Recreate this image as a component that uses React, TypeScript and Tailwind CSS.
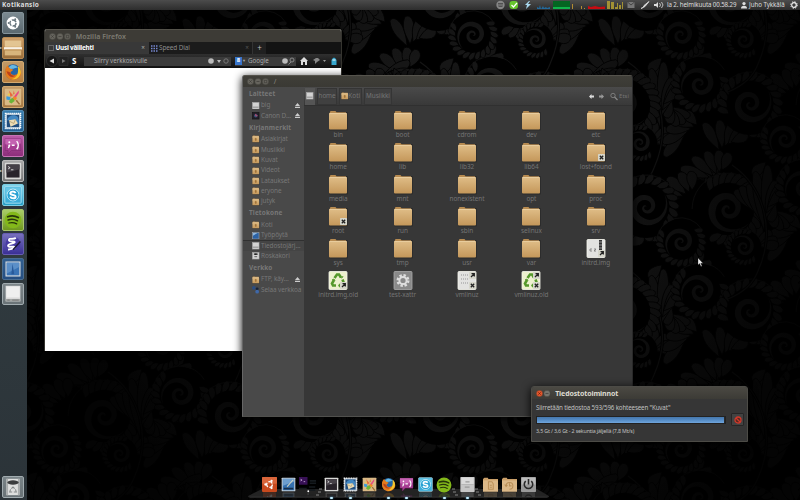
import React from "react";

const FONT = "font-['Noto_Sans','Open_Sans',sans-serif]";

type Point = [number, number];

function spiralPath(cx: number, cy: number, r: number, start: number, turns = 2): string {
  const outer: Point[] = [];
  const inner: Point[] = [];
  const n = 60;
  for (let i = 0; i <= n; i++) {
    const t = i / n;
    const a = start + t * turns * Math.PI * 2;
    const rad = r * Math.pow(1 - t, 1.15);
    const w = r * 0.36 * Math.min(1, t * 5) * Math.pow(1 - t, 0.9);
    outer.push([cx + Math.cos(a) * rad, cy + Math.sin(a) * rad]);
    const ri = Math.max(0, rad - w);
    inner.push([cx + Math.cos(a) * ri, cy + Math.sin(a) * ri]);
  }
  return "M" + [...outer, ...inner.reverse()].map((p) => p[0].toFixed(1) + " " + p[1].toFixed(1)).join("L") + "Z";
}

function Leaf({ x, y, a, l, w }: { x: number; y: number; a: number; l: number; w: number }) {
  return (
    <path
      stroke="#000"
      strokeWidth="0.8"
      transform={`translate(${x.toFixed(1)} ${y.toFixed(1)}) rotate(${a.toFixed(1)})`}
      d={`M0 0C${l * 0.3} ${-w * 0.5} ${l * 0.6} ${-w * 1.3} ${l} ${-w * 0.6}C${l * 1.15} ${w * 0.3} ${l * 0.8} ${w * 0.9} ${l * 0.55} ${w * 0.7}C${l * 0.3} ${w * 0.6} ${l * 0.1} ${w * 0.2} 0 0Z`}
    />
  );
}

function Curl({ x, y, r, s, leaves = 16 }: { x: number; y: number; r: number; s: number; leaves?: number }) {
  return (
    <g>
      <circle cx={x} cy={y} r={r * 1.24} fill="#000" />
      {Array.from({ length: leaves }, (_, i) => {
        const a = s - 3 + (i / leaves) * 4.4;
        return (
          <Leaf key={i} x={x + Math.cos(a) * r * 0.86} y={y + Math.sin(a) * r * 0.86} a={(a * 180) / Math.PI + 50} l={r * 0.54} w={r * 0.17} />
        );
      })}
      <circle cx={x} cy={y} r={r * 0.94} fill="#000" />
      <path d={spiralPath(x, y, r * 0.9, s)} />
      <path d={`M${x - r * 1.28} ${y}A${r * 1.28} ${r * 1.28} 0 0 1 ${x + r * 1.1} ${y - r * 0.65}`} fill="none" stroke="#181818" strokeWidth="0.8" />
    </g>
  );
}

function Filler() {
  const clumps: Point[] = [[10, 20], [52, 30], [165, 30], [190, 75], [20, 150], [70, 180], [130, 170], [185, 185], [160, 95], [95, 150], [60, 70], [140, 5]];
  return (
    <g>
      {clumps.map(([x, y], j) =>
        [0, 1, 2, 3, 4].map((i) => <Leaf key={`${j}-${i}`} x={x + i * 3} y={y - i * 2} a={j * 67 + i * 24} l={30 - i * 3} w={6.5} />)
      )}
    </g>
  );
}

function Motif() {
  return (
    <g>
      {[-138, -122, -108, -97, -86, -74, -60, -44].map((a, i) => (
        <Leaf key={a} x={36 + (i - 3) * 0.8} y={128 - Math.abs(i - 3) * 6} a={a} l={i === 3 || i === 4 ? 58 : 46 - Math.abs(i - 3) * 4} w={7} />
      ))}
      <Curl x={76} y={84} r={22} s={2.6} />
      <Curl x={126} y={104} r={25} s={-0.6} />
      <Curl x={104} y={2} r={28} s={0.6} leaves={20} />
      <Curl x={161} y={139} r={19} s={2.2} />
      <Curl x={120} y={40} r={14} s={-2.6} />
      <path d="M4 62C36 84 48 128 30 168C24 184 10 192 0 196" fill="none" stroke="#000" strokeWidth="3" />
      <path d="M4 62C36 84 48 128 30 168C24 184 10 192 0 196" fill="none" stroke="#181818" strokeWidth="1.1" />
    </g>
  );
}

const offsets: Point[] = [[0, 0], [208, 0], [-208, 0], [0, 207], [0, -207], [104, 103], [-104, 103], [104, -104], [-104, -104]];

function Wallpaper() {
  return (
    <svg className="absolute inset-0" width="800" height="500">
      <defs>
        <pattern id="damask" width="208" height="207" patternUnits="userSpaceOnUse">
          <g fill="#1a1a1a">
            {offsets.map(([x, y]) => <g key={`f${x},${y}`} transform={`translate(${x} ${y})`}><Filler /></g>)}
            {offsets.map(([x, y]) => <g key={`m${x},${y}`} transform={`translate(${x} ${y})`}><Motif /></g>)}
          </g>
        </pattern>
        <radialGradient id="shade" gradientUnits="userSpaceOnUse" cx="450" cy="190" r="400">
          <stop offset="0" stopColor="#000" stopOpacity="0" />
          <stop offset="0.4" stopColor="#000" stopOpacity="0.2" />
          <stop offset="0.72" stopColor="#000" stopOpacity="0.65" />
          <stop offset="1" stopColor="#000" stopOpacity="0.86" />
        </radialGradient>
      </defs>
      <rect width="800" height="500" fill="#000" />
      <rect width="800" height="500" fill="url(#damask)" />
      <rect width="800" height="500" fill="url(#shade)" />
    </svg>
  );
}

type Kind =
  | "ubuntu" | "files" | "firefox" | "paint" | "mail" | "chat" | "term" | "skype" | "spotify" | "emacs" | "screen" | "drive" | "trash"
  | "ubuntuOrange" | "desk" | "spaces" | "docfolder" | "clockfolder" | "power" | "cabinet";

const Circles = () => (
  <g fill="none" stroke="#fff" strokeWidth="2">
    <circle cx="11" cy="11" r="4.2" strokeDasharray="6.6 2.2" />
    <g fill="#fff" stroke="none"><circle cx="5" cy="11" r="1.7" /><circle cx="14" cy="5.8" r="1.7" /><circle cx="14" cy="16.2" r="1.7" /></g>
  </g>
);

function Glyph({ kind }: { kind: Kind }) {
  switch (kind) {
    case "ubuntu":
      return <><circle cx="11" cy="11" r="7.8" fill="#fff" /><circle cx="11" cy="11" r="3.7" fill="none" stroke="#68767d" strokeWidth="1.7" strokeDasharray="6.2 1.55" /><circle cx="5.700" cy="11" r="1.200" fill="#68767d" /><circle cx="13.700" cy="6.400" r="1.200" fill="#68767d" /><circle cx="13.700" cy="15.600" r="1.200" fill="#68767d" /></>;
    case "ubuntuOrange":
      return <><rect width="22" height="22" rx="1.5" fill="#c94a1e" /><rect width="22" height="10" rx="1.5" fill="#d9653a" /><Circles /></>;
    case "files":
      return <><path d="M1 2h20v18H1z" fill="#d8b57c" /><path d="M1 2h20v7H1z" fill="#e3c592" /><path d="M0 10h22v2.8H0z" fill="#f8f1e5" /><path d="M1 12.800h20v1.200H1z" fill="#b88a4c" /></>;
    case "firefox":
      return (
        <>
          <circle cx="11" cy="11" r="9.5" fill="#2565a4" />
          <path d="M6 5c3-4 9-3 11 1-3-1-4 1-7 1S7 9 5 8z" fill="#65b9e4" />
          <path d="M1.500 8C3 4 4 3 5 3c0 2 2 3 3 4l3 1c0 2-3 2-3 4 1 3 5 3 7 2 3-1 4-4 3-8 4 4 4 10-1 13-6 4-15 1-15.500-7z" fill="#e47b1c" />
          <path d="M17 4c4 3 5 9 1 13-3 3-6 3-9 3 7-2 9-7 8-16z" fill="#f6c62b" />
          <path d="M3 10c2 0 4 1 5 2 0 3 3 4 6 3-3 4-9 2-11-5z" fill="#b9401a" />
        </>
      );
    case "paint":
      return (
        <>
          <rect x="1" y="1" width="20" height="20" rx="1" fill="#d9b985" />
          <path d="M6 3l5 6-3 2zM12 3l1 4-2 1z" fill="#e8693c" />
          <path d="M18 3l-8 10 3 1 5-8z" fill="#e64a83" />
          <path d="M3 10l5 1-1 4-4-1z" fill="#3b9bd8" />
          <path d="M8 13l4-1 1 4-4 3-3-2z" fill="#6ab436" />
          <path d="M12 10l4 2-2 3-3-2z" fill="#f08a24" />
          <path d="M15 15l4 5" stroke="#9a6c37" strokeWidth="1.8" />
          <circle cx="6" cy="8" r="1.2" fill="#f2cf3a" />
        </>
      );
    case "mail":
      return (
        <>
          <rect x="1.800" y="1.800" width="18.400" height="18.400" fill="#c5d7e4" stroke="#fff" strokeWidth="1.800" strokeDasharray="1.500 1" />
          <rect x="3.500" y="3.500" width="15" height="15" fill="#1f4c7d" />
          <path d="M4 10c1-6 9-8 13-4l1 4v5c-3-4-8-4-14-5z" fill="#4388c2" />
          <path d="M6 10l8-1 3 5-9 4z" fill="#ecdcb4" />
          <path d="M6 11l6 3 2-5" fill="none" stroke="#a28e63" strokeWidth=".8" />
        </>
      );
    case "chat":
      return (
        <>
          <path d="M1.500 2h19v14.500H9L5 20.500v-4H1.500z" fill="#a63d92" stroke="#762768" strokeWidth=".6" />
          <path d="M1.500 2h19v6q-9 3-19 1z" fill="#c462b1" />
          <g fill="none" stroke="#fff" strokeWidth="1.700"><path d="M9.500 10h3.500M15.500 5q4 5 0 10M6.500 10.500q0 2-1.500 3" /></g>
          <circle cx="6.500" cy="6.500" r="1.200" fill="#fff" /><circle cx="6.500" cy="10.500" r="1.200" fill="#fff" />
        </>
      );
    case "term":
      return <><rect x="1" y="1" width="20" height="20" rx="1" fill="#d8d8d6" /><rect x="3" y="3" width="16" height="16" fill="#28232a" /><path d="M3 3h16v6L3 13z" fill="#454047" /><path d="M5 5.500l2.500 1.500L5 8.500M8.500 9.500h3" fill="none" stroke="#eee" strokeWidth="1" /></>;
    case "skype":
      return <><rect x="1" y="1" width="20" height="20" rx="1" fill="#3caed9" stroke="#b8e8f5" strokeWidth="1" /><rect x="2" y="2" width="18" height="8" fill="#66c6e6" /><g fill="none" stroke="#e4f7fd" strokeWidth="1.100"><circle cx="11" cy="11" r="7.200" /></g><circle cx="11" cy="11" r="6.700" fill="#27a1d3" /><path d="M14.200 8.500C12.500 6 7.700 6.500 7.700 9c0 2.800 6.500 1.200 6.500 4 0 2.800-5.200 2.800-6.700 0" fill="none" stroke="#fff" strokeWidth="2.400" /></>;
    case "spotify":
      return <><circle cx="11" cy="11" r="10.200" fill="#83b81a" /><g fill="none" stroke="#26340a" strokeLinecap="round"><path d="M4.500 7q7-2.500 13 1" strokeWidth="2.200" /><path d="M5 11q6-2 11.500 1" strokeWidth="1.800" /><path d="M6 14.700q5-1.500 9.500 1" strokeWidth="1.500" /></g></>;
    case "emacs":
      return <><circle cx="11" cy="11" r="9" fill="#473ba2" /><path d="M14.500 3.500C11 6 6 3 6 6s8 1 7 3-8 1-8 4 8 0 8 2-4 2-8 3" fill="none" stroke="#fff" strokeWidth="2.300" /><path d="M20 8l-9 10" stroke="#191731" strokeWidth="1.800" /></>;
    case "screen":
      return <><rect x="2.500" y="2.500" width="17" height="17" fill="#3973b5" stroke="#d8dcdf" strokeWidth="1.400" /><path d="M3.500 3.500h15v5l-15 8z" fill="#5b8fc8" /><path d="M10.500 4.500l2 13H9z" fill="#28599a" /></>;
    case "desk":
      return <><rect x="1" y="1" width="20" height="20" rx="1" fill="#cbd4dc" /><rect x="2.500" y="2.500" width="17" height="17" fill="#3570af" /><path d="M3 3h16v4L3 13z" fill="#6d9ece" /><path d="M4 17h14" stroke="#162f4c" strokeWidth="2.500" /><path d="M18 4l-9 10" stroke="#d8d8bd" strokeWidth="1.500" /></>;
    case "drive":
      return <><path d="M2 1h18v19H2z" fill="#dedfdf" /><path d="M3 2h16v13H3z" fill="#efefef" /><path d="M2 17h18v3H2z" fill="#a2a5a4" /><path d="M4 18.500h3m3 0h8" stroke="#666" strokeWidth=".8" /></>;
    case "trash":
      return <><path d="M3 1h16v20H3z" fill="#dedfde" /><path d="M3 1h2v20H3zm14 0h2v20h-2z" fill="#a9adad" /><ellipse cx="11" cy="5.500" rx="7" ry="2.600" fill="#3b3d3e" /><g fill="none" stroke="#858989" strokeWidth="1.300"><path d="M9 13l2-2 2 2M14 14l1 3h-3M10 17H7l1-3" /></g></>;
    case "spaces":
      return <><rect x="0" y="0" width="11" height="10" fill="#371055" /><path d="M2 3l2 1-2 1m4 1h2" stroke="#d3b7e3" fill="none" /><path d="M14 5h8M14 8h8M0 15h10M13 13h8M13 17h8" stroke="#151a1e" strokeWidth="2" /><circle cx="12" cy="18.500" r="1.200" fill="#fff" /></>;
    case "docfolder":
    case "clockfolder":
      return (
        <>
          <path d="M0 3l2-2h5l1 2h14v18H0z" fill="#cba06a" /><path d="M0 5h22v16.500H0z" fill="#dbb888" />
          <g fill="none" stroke="#b98f58" strokeWidth="1.500">{kind === "docfolder" ? <path d="M8 7h5l2 3v8H8zM10 12h3m-3 3h3" /> : <path d="M6 13a5 5 0 1 1 5 5M11 9v4h3M4 11l2 3 2-2" />}</g>
        </>
      );
    case "power":
      return <><rect x="0" y="0" width="22" height="22" rx="1" fill="#999" /><rect x="1" y="1" width="20" height="10" fill="#bababa" /><path d="M7 6a6.200 6.200 0 1 0 8 0M11 3v8" fill="none" stroke="#292929" strokeWidth="2.300" /></>;
    case "cabinet":
      return <><rect x="0.500" y="0" width="21" height="22" rx="1" fill="#c6c6c6" /><path d="M2 1h18v10H2z" fill="#dadada" /><path d="M2 11h18" stroke="#aaa" /><path d="M8 7h6M7 15h7" stroke="#9a9a9a" strokeWidth="1.800" /></>;
  }
}

function AppIcon({ kind, size }: { kind: Kind; size: number }) {
  return <svg width={size} height={size} viewBox="0 0 22 22" className="block shrink-0"><Glyph kind={kind} /></svg>;
}

const launcher: { kind: Kind; bg: string; mark?: boolean }[] = [
  { kind: "ubuntu", bg: "from-[#7b8a91] to-[#5b6970] border-[#84939a]" },
  { kind: "files", bg: "from-[#cfa069] to-[#9a6f3b] border-[#ba8b53]", mark: true },
  { kind: "firefox", bg: "from-[#c29b68] to-[#ba8140] border-[#d3aa70]", mark: true },
  { kind: "paint", bg: "from-[#c29b68] to-[#a57842] border-[#d3aa70]" },
  { kind: "mail", bg: "from-[#397eaf] to-[#245e91] border-[#5690b9]", mark: true },
  { kind: "chat", bg: "from-[#bb5aa7] to-[#8d2e7b] border-[#c674b5]", mark: true },
  { kind: "term", bg: "from-[#a8a8a8] to-[#777] border-[#bcbcbc]", mark: true },
  { kind: "skype", bg: "from-[#83d4ea] to-[#249cc5] border-[#79cde4]" },
  { kind: "spotify", bg: "from-[#a9ce68] to-[#70991c] border-[#a7c46c]", mark: true },
  { kind: "emacs", bg: "from-[#7870bd] to-[#3b2f96] border-[#655cb1]" },
  { kind: "screen", bg: "from-[#315f91] to-[#254e81] border-[#496d91]" },
  { kind: "drive", bg: "from-[#7c8589] to-[#697276] border-[#a1abaf]" },
];

function Tile({ kind, bg, mark }: { kind: Kind; bg: string; mark?: boolean }) {
  return (
    <div className="flex h-[22px] items-center">
      <span className="w-[2px] text-[4px] leading-none text-[#ddd]">{mark ? "▸" : ""}</span>
      <div className={`flex h-[22px] w-[22px] items-center justify-center rounded-[2px] border bg-gradient-to-b ${bg}`}>
        <AppIcon kind={kind} size={18} />
      </div>
    </div>
  );
}

function Launcher() {
  return (
    <div className="relative flex h-[490px] w-[27px] flex-col bg-gradient-to-b from-[#20282b] via-[#303a3f] to-[#2b3338] pt-[2px]">
      <div className="flex flex-col gap-[2.600px]">{launcher.map((l) => <Tile key={l.kind} {...l} />)}</div>
      <div className="mt-auto mb-[2px]"><Tile kind="trash" bg="from-[#7a8488] to-[#697276] border-[#a1abaf]" /></div>
    </div>
  );
}

function TopBar() {
  return (
    <div className="relative flex h-[10px] w-full items-center bg-gradient-to-b from-[#4c4c4c] to-[#2d2d2d] text-[#ddd]">
      <span className="ml-[2px] text-[6.500px] font-bold leading-[10px] tracking-[0.260px]">Kotikansio</span>
      <div className="ml-auto flex h-[10px] w-[306px] items-center">
        <svg className="block shrink-0" width="173" height="10" viewBox="0 0 173 10">
          <circle cx="6.500" cy="5" r="4.200" fill="#858585" /><path d="M4 3.500h5M4 5h5M4.500 6.500h4" stroke="#444" strokeWidth=".8" />
          <rect x="15.500" y="1" width="8.500" height="8" rx="3" fill="#67c52e" /><path d="M17.500 5l2 2 3.500-4" fill="none" stroke="#fff" strokeWidth="1.200" />
          <path d="M35 1l-4 4h2l-1 4 5-5h-3l2-3z" fill="#a9d9ee" />
          <path d="M43 9V7l2 1 1-3 1 4 2-3 1 2 2-1 1 1 3-1v2z" fill="#24699a" />
          <path d="M59 1h17v8H59z" fill="#056522" /><path d="M59 7h17v2H59z" fill="#10b34b" />
          <path d="M78 9V4h1v5m8 0V6h1v3m2 0V8h1v1" fill="#b18b33" />
          <path d="M94 9V6l3 1 4-1 4 1 6-.5V9z" fill="#c60c12" />
          <path d="M113 1h3v8h-3zm4 1h3v7h-3zm4 5h2v2h-2zm2-4h1v6h-1zm2 2h2v4h-2zm3-3h1v7h-1z" fill="#a29134" />
          <rect x="133.500" y="2" width="7" height="6" fill="#777" /><path d="M133.500 2l3.500 3L140.500 2" fill="none" stroke="#393939" strokeWidth=".8" />
          <path d="M147 8.500l2-1 1-2 5-4-4 5-2 1z" fill="#ddd" stroke="#ddd" strokeWidth=".8" />
          <path d="M160 4h2l2-2v6l-2-2h-2z" fill="#ddd" /><path d="M165.500 3q2 2 0 4M167.500 2q3 3 0 6" stroke="#ddd" fill="none" strokeWidth=".8" />
        </svg>
        <span className="w-[71px] shrink-0 whitespace-nowrap text-[6.200px] leading-[10px] tracking-[-0.130px]">la 2. helmikuuta 00.58.29</span>
        <svg width="6" height="8" viewBox="0 0 7 8" className="ml-[3px] mr-[2px] shrink-0"><circle cx="3.500" cy="2.300" r="1.900" fill="#ddd" /><path d="M0 8q0-3 3.500-3T7 8z" fill="#ddd" /></svg>
        <span className="whitespace-nowrap text-[6.200px] leading-[10px] tracking-[-0.050px]">Juho Tykkälä</span>
        <svg width="8" height="8" viewBox="0 0 8 8" className="ml-auto mr-[2px] shrink-0"><circle cx="4" cy="4" r="2.300" fill="none" stroke="#eee" strokeWidth="1.200" /><circle cx="4" cy="4" r="3.300" fill="none" stroke="#eee" strokeWidth="1" strokeDasharray="1.300 1.300" /></svg>
      </div>
    </div>
  );
}

function WinButtons({ n, active }: { n: number; active?: boolean }) {
  return (
    <svg width={n * 7.6} height="7" viewBox={`0 0 ${n * 7.6} 7`} className="block shrink-0">
      {Array.from({ length: n }, (_, i) => (
        <g key={i}>
          <circle cx={3.500 + i * 7.500} cy="3.500" r="3.200" fill={active && i === 0 ? "#e5562b" : active ? "#77756d" : "#66645d"} stroke="#3a3934" strokeWidth=".4" />
          <path d={i === 0 ? "M2.300 2.300l2.400 2.400m0-2.400L2.300 4.700" : i === 1 ? "M9.500 3.500h3" : "M17.300 2.300h2.500v2.500h-2.500z"} stroke={active && i === 0 ? "#5e1808" : "#3c3b36"} strokeWidth=".7" fill="none" />
        </g>
      ))}
    </svg>
  );
}

function Firefox() {
  return (
    <div className="absolute left-[44px] top-[29px] flex h-[322px] w-[298px] flex-col overflow-hidden rounded-t-[3px] border-x border-[#35342f] bg-white shadow-[0_2px_8px_#000]">
      <div className="flex h-[13px] items-center border-t border-[#55534b] bg-[#3d3b36] pl-[4px]">
        <WinButtons n={3} /><span className="ml-[4px] text-[7px] font-semibold leading-none tracking-[0.050px] text-[#7d7b73]">Mozilla Firefox</span>
      </div>
      <div className="flex h-[12px] bg-[#131313] text-[6.400px] leading-[12px]">
        <div className="flex w-[104px] items-center bg-[#383838]"><span className="ml-[3px] h-[6px] w-[6px] border border-dashed border-[#666]" /><span className="ml-[1.500px] font-bold tracking-[-0.250px] text-white">Uusi välilehti</span><span className="ml-auto mr-[4px] text-[#aaa]">×</span></div>
        <div className="flex w-[104px] items-center border-r border-[#333] bg-[#1b1b1b] text-[#8c8c8c]">
          <svg width="7" height="7" className="ml-[2px]"><path d="M0 1h7M0 3.500h7M0 6h7" stroke="#7788d0" strokeWidth="1.500" strokeDasharray="1.500 1" /></svg>
          <span className="ml-[1px] tracking-[-0.100px]">Speed Dial</span><span className="ml-auto mr-[3px] text-[#555]">×</span>
        </div>
        <span className="w-[13px] bg-[#202020] text-center text-[8px] text-[#bbb]">+</span>
      </div>
      <div className="flex h-[14px] shrink-0 items-center bg-gradient-to-b from-[#303030] to-[#111] text-[6.200px] text-[#aaa]">
        <svg width="34" height="12" viewBox="0 0 34 12"><circle cx="7" cy="6" r="5.500" fill="#171717" stroke="#444" strokeWidth=".5" /><path d="M9 3.500v5L4.500 6z" fill="#ddd" /><rect x="14" y="1.500" width="9" height="9" fill="#222" stroke="#383838" strokeWidth=".5" /><path d="M17 4v4l3.500-2z" fill="#777" /></svg>
        <span className="ml-[-7px] w-[12px] text-[8px] font-bold text-white">S</span>
        <div className="flex h-[9px] w-[147px] items-center bg-[#3b3b3b] pl-[10px]">
          <span className="whitespace-nowrap tracking-[-0.050px]">Siirry verkkosivulle</span>
          <svg width="24" height="8" className="ml-auto"><circle cx="4" cy="4" r="2.800" fill="#bbb" /><path d="M10 3h4l-2 3z" fill="#bbb" /><circle cx="19" cy="4" r="2.200" stroke="#777" fill="none" /></svg>
        </div>
        <div className="ml-[4px] flex h-[9px] w-[61px] items-center bg-[#3b3b3b]"><span className="h-[8px] w-[7px] bg-[#3874ca] text-center text-[6px] font-bold leading-[7px] text-white">8</span><span className="text-[4px]">▼</span><span className="ml-[2px]">Google</span><svg width="15" height="8" className="ml-auto"><circle cx="4" cy="4" r="2.800" fill="#bbb" /><circle cx="11" cy="3" r="2" fill="none" stroke="#888" /><path d="M10 5L7.500 7.500" stroke="#888" /></svg></div>
        <svg width="40" height="10" className="ml-[3px]"><path d="M1 5l4-4 4 4H8v4H6V6H4v3H2V5z" fill="#ddd" /><path d="M14 4l3-2h2l2 2-3 2-2 2V5z" fill="#888" /><path d="M24 4h3l-1.500 2z" fill="#999" /><path d="M32.500 9V4q2.500-5 5 0v5z" fill="#37a8cf" /><path d="M33.500 4h3" stroke="#fff" /></svg>
      </div>
      <div className="flex-1 bg-white" />
    </div>
  );
}

function Folder({ size = 20, glyph }: { size?: number; glyph?: boolean }) {
  return (
    <svg width={size} height={size} viewBox="0 0 20 20" className="block shrink-0 overflow-visible">
      <defs><linearGradient id="fold" x2="0" y2="1"><stop offset="0" stopColor="#dfbd87" /><stop offset="1" stopColor="#c4975a" /></linearGradient></defs>
      <rect x="1" y="2" width="19" height="18.500" rx="1" fill="#252525" opacity=".6" />
      <path d="M1.500 3l1-2h5l1 1.300h9.500V8H1.500z" fill="#b78b51" />
      <rect x="1" y="3" width="18" height="16.500" rx="1" fill="url(#fold)" /><path d="M1.500 3.500h17" stroke="#ecd2a7" strokeWidth=".7" />
      {glyph && <path d="M10 7l4 4h-2v4H8v-4H6z" fill="#a0733a" />}
    </svg>
  );
}

function Emblem({ lock }: { lock?: boolean }) {
  return (
    <svg width="7" height="7" viewBox="0 0 7 7"><rect width="7" height="7" rx=".7" fill="#d6d6cb" /><path d={lock ? "M1.800 1.800l3.400 3.400m0-3.400L1.800 5.200" : "M2 5l3-3M2.500 1.700h2.800v2.800"} stroke="#222" strokeWidth="1.300" fill="none" /></svg>
  );
}

function FileIcon({ type }: { type: string }) {
  if (type === "folder") return <Folder />;
  return (
    <svg width="20" height="20" viewBox="0 0 20 20" className="block">
      <rect x="1" y="1.500" width="18" height="18" rx="1" fill={type === "recycle" ? "#edf1ce" : type === "gear" ? "#898989" : "#e2e2e0"} stroke={type === "gear" ? "#aaa" : "#f7f7ef"} strokeWidth=".8" />
      {type === "recycle" && <g fill="none" stroke="#55982c" strokeWidth="2.600"><path d="M6.500 8L9 4.500h2l2 3M14.500 9.500l1.500 4-2 2h-3M8 15.500H5l-1-2L6 10" /><path d="M11.500 7l2.500 1 1-2M12 13.500l-1.500 2 1.500 2M4 10l2-1 1 2" strokeWidth="1" /></g>}
      {type === "gear" && <><circle cx="10" cy="10.500" r="5" fill="none" stroke="#ddd" strokeWidth="3" strokeDasharray="2.300 1.600" /><circle cx="10" cy="10.500" r="3.600" fill="none" stroke="#ddd" strokeWidth="2" /></>}
      {type === "archive" && <><path d="M13 2h3v15h-3z" fill="#333" /><path d="M13 4h3m-3 3h3m-3 3h3" stroke="#aaa" strokeWidth=".8" /><path d="M4 11h2m-2 0v2h2m2-2h2l-2 2h2" stroke="#777" strokeWidth=".8" fill="none" /></>}
      {type === "binary" && <path d="M4 5h7M4 9h7M4 13h7" stroke="#bbb" strokeWidth="2" strokeDasharray="1 1" />}
    </svg>
  );
}

type FileEntry = { name: string; type?: string; emblem?: "x" | "link" | "both" };
const files: FileEntry[] = [
  { name: "bin" }, { name: "boot" }, { name: "cdrom" }, { name: "dev" }, { name: "etc" },
  { name: "home" }, { name: "lib" }, { name: "lib32" }, { name: "lib64" }, { name: "lost+found", emblem: "x" },
  { name: "media" }, { name: "mnt" }, { name: "nonexistent" }, { name: "opt" }, { name: "proc" },
  { name: "root", emblem: "x" }, { name: "run" }, { name: "sbin" }, { name: "selinux" }, { name: "srv" },
  { name: "sys" }, { name: "tmp" }, { name: "usr" }, { name: "var" }, { name: "initrd.img", type: "archive", emblem: "link" },
  { name: "initrd.img.old", type: "recycle", emblem: "link" }, { name: "test-xattr", type: "gear" }, { name: "vmlinuz", type: "binary", emblem: "both" }, { name: "vmlinuz.old", type: "recycle", emblem: "both" },
];

type Place = { name: string; icon?: string; eject?: boolean; selected?: boolean };
const places: { title: string; items: Place[] }[] = [
  { title: "Laitteet", items: [{ name: "big", icon: "drive", eject: true }, { name: "Canon D…", icon: "camera", eject: true }] },
  { title: "Kirjanmerkit", items: ["Asiakirjat", "Musiikki", "Kuvat", "Videot", "Lataukset", "eryone", "jutyk"].map((name) => ({ name })) },
  { title: "Tietokone", items: [{ name: "Koti", icon: "home" }, { name: "Työpöytä", icon: "desk" }, { name: "Tiedostojärj…", icon: "drive", selected: true }, { name: "Roskakori", icon: "trash" }] },
  { title: "Verkko", items: [{ name: "FTP, käy…", icon: "home", eject: true }, { name: "Selaa verkkoa", icon: "net" }] },
];

function PlaceIcon({ icon }: { icon?: string }) {
  if (!icon || icon === "home") return <Folder size={7.500} glyph />;
  return (
    <svg width="7.500" height="7.500" viewBox="0 0 8 8" className="shrink-0">
      {icon === "net" ? <><circle cx="2" cy="2" r="2" fill="#2b4d82" /><circle cx="5.500" cy="3" r="1.500" fill="#16223a" /><circle cx="5.500" cy="6" r="2" fill="#3f68a8" /></> : <rect x=".5" y=".5" width="7" height="7" fill={icon === "desk" ? "#2c62a4" : icon === "camera" ? "#221f29" : "#d3d3d3"} stroke={icon === "camera" ? "#111" : "#aaa"} strokeWidth=".6" />}
      {icon === "drive" && <path d="M1 5.500h6" stroke="#888" />}
      {icon === "camera" && <><circle cx="4" cy="4" r="1.800" fill="#3c587e" /><path d="M4 2v2h2" stroke="#c24870" fill="none" /></>}
      {icon === "trash" && <><ellipse cx="4" cy="2.200" rx="2.300" ry="1" fill="#222" /><path d="M2.500 5h3" stroke="#555" /></>}
      {icon === "desk" && <path d="M1 1h5L1 4z" fill="#8db6df" />}
    </svg>
  );
}

function Nautilus() {
  return (
    <div className="absolute left-[242px] top-[75px] flex h-[342px] w-[391px] flex-col overflow-hidden rounded-t-[3px] border border-t-[#55534c] border-r-[#292929] border-b-[#50504d] border-l-[#656565] bg-[#373737] shadow-[0_2px_8px_#000]">
      <div className="flex h-[11px] shrink-0 items-center bg-gradient-to-b from-[#403f39] to-[#3a3934] pl-[4px]"><WinButtons n={3} /><span className="ml-[4px] text-[7px] leading-none text-[#88867d]">/</span></div>
      <div className="flex flex-1">
        <div className="flex w-[61px] flex-col bg-[#494949] pt-[0.800px] text-[6.400px] text-[#787878]">
          {places.map((g) => (
            <div key={g.title} className="mb-[0.600px]">
              <div className="h-[12.400px] pl-[6px] font-bold leading-[12px] tracking-[0.150px]">{g.title}</div>
              {g.items.map((p) => (
                <div key={p.name} className={`flex h-[10.400px] items-center gap-[1.500px] pl-[9px] leading-[10px] ${p.selected ? "border-t border-[#303030] bg-[#444] text-[#777]" : ""}`}>
                  <PlaceIcon icon={p.icon} /><span className="whitespace-nowrap tracking-[-0.080px]">{p.name}</span>
                  {p.eject && <svg width="5" height="5" viewBox="0 0 5 5" className="ml-auto mr-[4px]"><path d="M2.500 0L5 3H0zM0 3.700h5V5H0z" fill="#ccc" /></svg>}
                </div>
              ))}
            </div>
          ))}
        </div>
        <div className="flex flex-1 flex-col">
          <div className="flex h-[19px] items-center border-b border-[#303030] bg-gradient-to-b from-[#4a4a4a] to-[#393939] pl-[1px] text-[6.400px] text-[#747474]">
            <div className="flex h-[17px] w-[10px] items-center justify-center bg-[#555]"><PlaceIcon icon="drive" /></div>
            <div className="ml-[2px] flex h-[17px] w-[20px] items-center justify-center border border-[#353535] bg-[#404040] tracking-[-0.150px]">home</div>
            <div className="ml-[2px] flex h-[17px] w-[23px] items-center justify-center border border-[#353535] bg-[#404040]"><Folder size={7.500} glyph />Koti</div>
            <div className="ml-[2px] flex h-[17px] w-[28px] items-center justify-center border border-[#353535] bg-[#404040] tracking-[-0.100px]">Musiikki</div>
            <svg width="30" height="9" viewBox="0 0 30 9" className="ml-auto"><path d="M0 4.500L2.500 2v1.500H5v2H2.500V7z" fill="#ddd" /><path d="M15 4.500L12.500 2v1.500H10v2h2.500V7z" fill="#999" /><circle cx="24" cy="3.500" r="2.200" fill="none" stroke="#888" strokeWidth=".8" /><path d="M25.500 5l3 3" stroke="#888" strokeWidth="1.300" /></svg>
            <span className="mr-[3px] text-[6px]">Etsi</span>
          </div>
          <div className="grid w-[324px] grid-cols-5 gap-y-0 pl-[2px] pt-[4px]">
            {files.map((f) => (
              <div key={f.name} className="flex h-[32.100px] flex-col items-center text-[6.400px] leading-[7px] text-[#747474]">
                <div className="relative">
                  <FileIcon type={f.type ?? "folder"} />
                  {f.emblem && <div className="absolute bottom-[1px] right-[1px] flex flex-col gap-[3px]">{f.emblem !== "x" && <Emblem />}{f.emblem !== "link" && <Emblem lock />}</div>}
                </div>
                <span className="mt-[0.800px] tracking-[-0.050px]">{f.name}</span>
              </div>
            ))}
          </div>
        </div>
      </div>
    </div>
  );
}

function Transfer() {
  return (
    <div className="absolute left-[531px] top-[386px] flex h-[56px] w-[217px] flex-col overflow-hidden rounded-t-[3px] border border-[#4c4b46] bg-[#363636] text-[#c0c0c0] shadow-[0_2px_10px_#000]">
      <div className="flex h-[12px] shrink-0 items-center bg-gradient-to-b from-[#4b4943] to-[#3c3b36] pl-[4px]"><WinButtons n={2} active /><span className="ml-[4px] text-[7px] font-bold leading-none tracking-[-0.120px] text-[#dedbd2]">Tiedostotoiminnot</span></div>
      <span className="mt-[4px] whitespace-nowrap pl-[4px] text-[6.200px] leading-[9px] tracking-[-0.140px]">Siirretään tiedostoa 593/596 kohteeseen "Kuvat"</span>
      <div className="flex h-[15px] items-center pl-[4px]">
        <div className="h-[8px] w-[190px] border border-[#222] bg-[#292929]"><div className="h-[6px] w-[187px] bg-gradient-to-b from-[#4576aa] via-[#548bc5] to-[#70a5db]" /></div>
        <div className="ml-[5px] flex h-[13px] w-[13px] items-center justify-center rounded-[1px] border border-[#262626] bg-[#424242]"><svg width="8" height="8"><circle cx="4" cy="4" r="3" fill="#582820" stroke="#d0382a" strokeWidth="1.300" /><path d="M2 2l4 4" stroke="#d0382a" strokeWidth="1.200" /></svg></div>
      </div>
      <span className="whitespace-nowrap pl-[4px] text-[5.300px] leading-[9px] tracking-[-0.160px]">3,5 Gt / 3,6 Gt - 2 sekuntia jäljellä (7,8 Mt/s)</span>
    </div>
  );
}

const dock: { kind?: Kind; gap: string; size?: number; lit?: boolean }[] = [
  { kind: "ubuntuOrange", gap: "ml-0" }, { kind: "desk", gap: "ml-[4px]" }, { kind: "spaces", gap: "ml-[3px]", size: 17 },
  { gap: "ml-0" },
  { kind: "term", gap: "ml-[2px]", lit: true }, { kind: "mail", gap: "ml-[4px]", lit: true }, { kind: "paint", gap: "ml-[4px]" }, { kind: "firefox", gap: "ml-[4px]", lit: true },
  { kind: "chat", gap: "ml-[3px]", lit: true }, { kind: "skype", gap: "ml-[4px]" }, { kind: "spotify", gap: "ml-[3px]", size: 16, lit: true },
  { gap: "ml-0" },
  { kind: "cabinet", gap: "ml-[2px]", lit: true },
  { gap: "ml-0" },
  { kind: "docfolder", gap: "ml-[2px]" }, { kind: "clockfolder", gap: "ml-[4px]" }, { kind: "power", gap: "ml-[4px]" },
];

function Dock() {
  return (
    <div className="absolute left-[248px] top-[475px] h-[25px] w-[302px]">
      <svg className="absolute left-0 top-[14px]" width="302" height="11"><path d="M14 0h275l12 7q0 2-4 2H4q-4 0-4-2z" fill="#232323" /><path d="M4 7h293q4 0 4 1H1q0-1 3-1z" fill="#292929" /></svg>
      <div className="relative flex items-start pl-[14px] pt-[2px]">
        {dock.map((d, i) => d.kind ? (
          <div key={i} className={`relative flex flex-col items-center ${d.gap}`}>
            <AppIcon kind={d.kind} size={d.size ?? 15} />
            <div className="absolute top-[15px] h-[5px] w-[13px] overflow-hidden opacity-20"><div className="-scale-y-100"><AppIcon kind={d.kind} size={13} /></div></div>
            {d.lit && <span className="absolute top-[19.500px] h-[2px] w-[3px] rounded-full bg-[#c7eeff] shadow-[0_0_2px_#5ab8e8]" />}
          </div>
        ) : <svg key={i} width="6" height="20" className={d.gap}><path d={i === 3 ? "M3 12h3M2 15h3M0 18h3" : "M0 12h3M1 15h3M3 18h3"} stroke="#858585" strokeWidth="1" /></svg>)}
      </div>
    </div>
  );
}

export default function App() {
  return (
    <div className={`relative h-[500px] w-[800px] overflow-hidden bg-black ${FONT}`}>
      <Wallpaper />
      <TopBar />
      <Launcher />
      <Firefox />
      <Nautilus />
      <Transfer />
      <Dock />
      <svg className="absolute left-[698px] top-[258px]" width="6" height="9"><path d="M0 0v7l1.500-1.500L3 8.500l1-.5-1.300-2.700H5z" fill="#eee" stroke="#111" strokeWidth=".3" /></svg>
    </div>
  );
}
